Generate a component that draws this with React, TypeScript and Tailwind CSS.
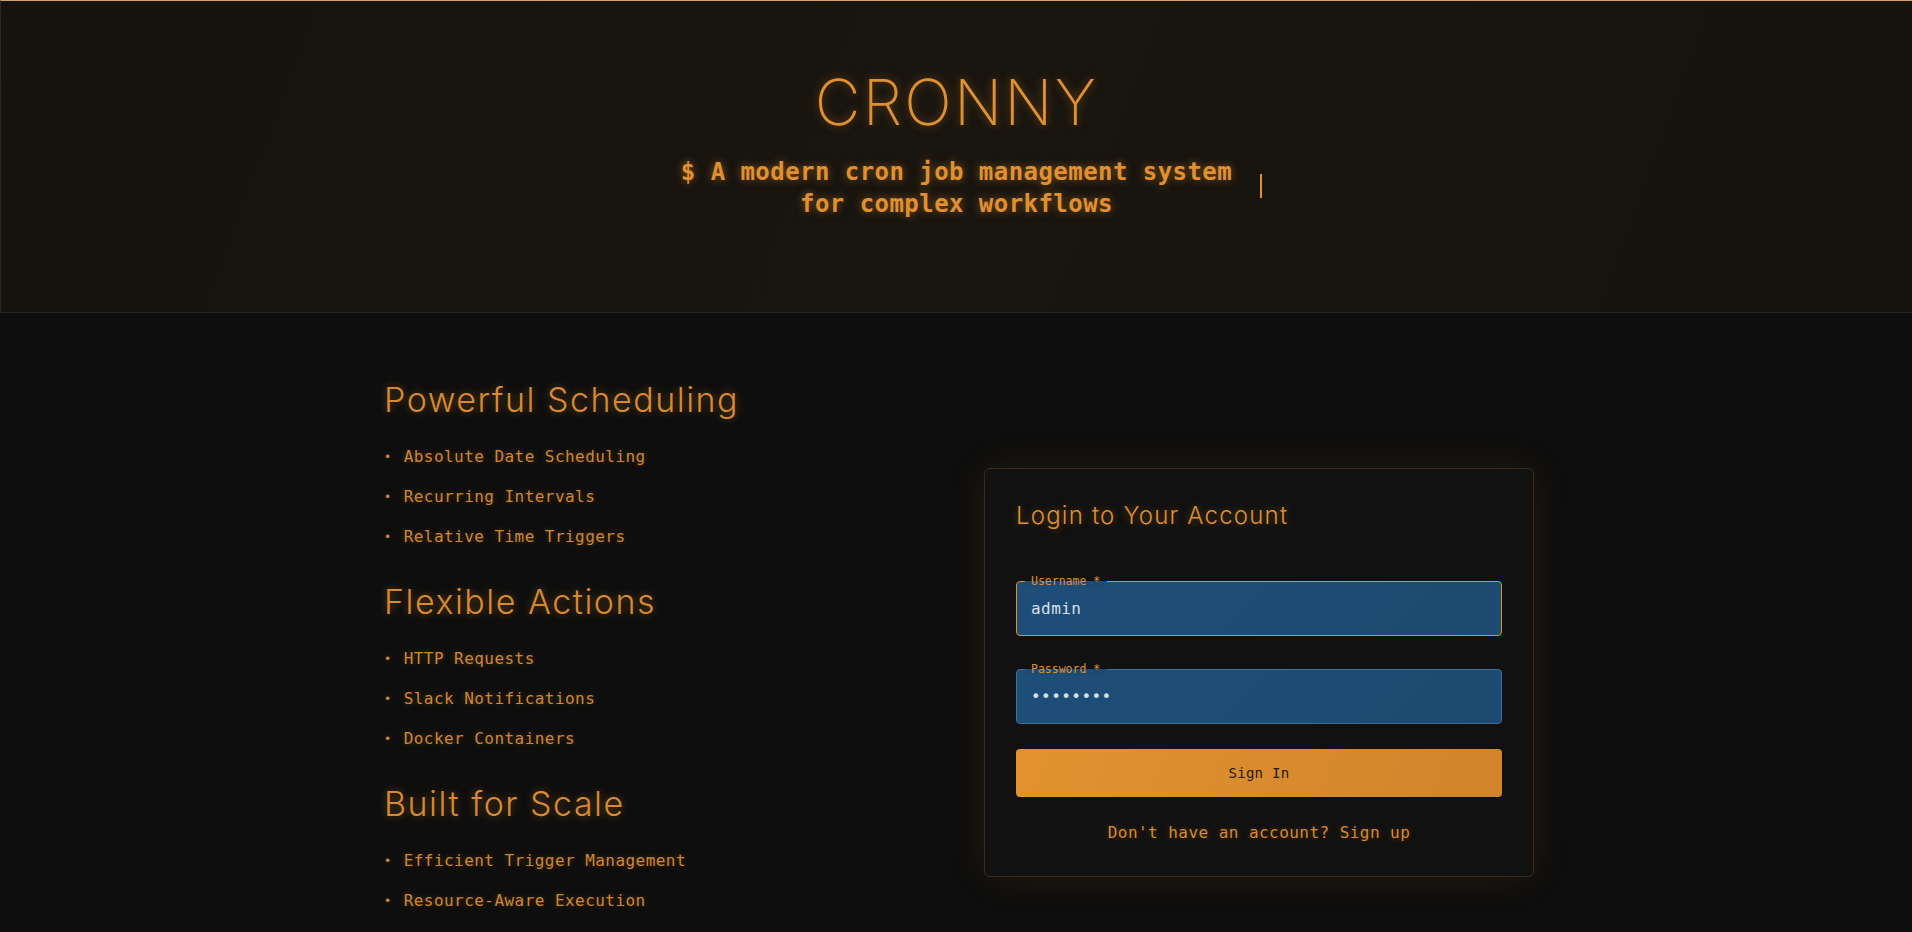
import React, { useState } from "react";

const sections = [
  {
    title: "Powerful Scheduling",
    items: ["Absolute Date Scheduling", "Recurring Intervals", "Relative Time Triggers"],
  },
  {
    title: "Flexible Actions",
    items: ["HTTP Requests", "Slack Notifications", "Docker Containers"],
  },
  {
    title: "Built for Scale",
    items: ["Efficient Trigger Management", "Resource-Aware Execution"],
  },
];

const mono = "font-['DejaVu_Sans_Mono','Liberation_Mono',monospace]";
const display = "font-['Inter','Lato',sans-serif]";

interface FieldProps {
  label: string;
  value: string;
  type?: string;
  focused?: boolean;
}

const Field: React.FC<FieldProps> = ({ label, value, type = "text", focused }) => {
  const [val, setVal] = useState(value);
  return (
    <div className="relative">
      <span
        className={`absolute left-[9px] top-[-7px] z-10 bg-[linear-gradient(to_bottom,#111111_50%,#1d4b73_50%)] pl-[6px] pr-[7px] text-[11.5px] leading-[14px] text-[#e0902f] ${mono}`}
      >
        {label}&#8202;*
      </span>
      <input
        type={type}
        value={val}
        onChange={(e) => setVal(e.target.value)}
        className={`h-[55px] w-full rounded-[4px] border bg-[linear-gradient(135deg,#1e4e78,#1c4a70)] px-[14px] text-[16px] tracking-[0.45px] text-[#d4e0ec] outline-none ${mono} ${
          focused ? "border-[#e0902f]" : "border-[#3f6f9c]"
        }`}
      />
    </div>
  );
};

const App: React.FC = () => {
  return (
    <div className="min-h-screen bg-[#0e0e0e]">
      <header className="flex h-[313px] flex-col items-center border-t border-b border-l border-t-[#d4a36b] border-b-[#2a241c] border-l-[#2b2824] bg-[linear-gradient(110deg,#16130e_0%,#19150f_50%,#16130e_100%)] pt-[70px]">
        <h1
          className={`text-[63px] font-extralight leading-none tracking-[0.035em] text-[#e0902f] [text-shadow:0_0_10px_rgba(224,144,47,0.45)] ${display}`}
        >
          CRONNY
        </h1>
        <div className="relative mt-[22px] w-[606px]">
          <p
            className={`text-center text-[24px] font-bold leading-[32px] tracking-[0.45px] text-[#e0902f] [text-shadow:0_0_8px_rgba(224,144,47,0.55)] ${mono}`}
          >
            $ A modern cron job management system for complex workflows
          </p>
          <span className="absolute right-[-2px] top-[18px] h-[24px] w-[2px] bg-[#e0902c]" />
        </div>
      </header>

      <main className="pl-[6px] pt-[66px] pb-16">
        <div className="mx-auto grid w-[1150px] grid-cols-2 items-start gap-[50px]">
          <div className="flex flex-col gap-[32px]">
            {sections.map((section) => (
              <section key={section.title}>
                <h2
                  className={`mb-[25px] text-[34px] font-light leading-[41px] tracking-[1.5px] text-[#d98a30] [text-shadow:0_0_8px_rgba(224,144,47,0.45)] ${display}`}
                >
                  {section.title}
                </h2>
                <ul className="space-y-4">
                  {section.items.map((item) => (
                    <li
                      key={item}
                      className={`flex items-center text-[16px] leading-[24px] tracking-[0.45px] text-[#d08732] [text-shadow:0_0_6px_rgba(224,144,47,0.3)] ${mono}`}
                    >
                      <span className="mr-[12px] text-[12px]">•</span>
                      {item}
                    </li>
                  ))}
                </ul>
              </section>
            ))}
          </div>

          <div className="mt-[89px] rounded-[6px] border border-[#3b2a18] bg-[#111111] p-[31px] shadow-[0_0_40px_rgba(224,144,47,0.10)]">
            <h3
              className={`mb-[49px] text-[24px] font-light leading-[32px] tracking-[1.2px] text-[#e0902f] [text-shadow:0_0_8px_rgba(224,144,47,0.4)] ${display}`}
            >
              Login to Your Account
            </h3>
            <div className="flex flex-col gap-[33px]">
              <Field label="Username" value="admin" focused />
              <Field label="Password" value="password" type="password" />
            </div>
            <button
              className={`mt-[25px] h-[48px] w-full rounded-[4px] bg-[linear-gradient(110deg,#e3922f,#d0842b)] text-[14px] tracking-[0.3px] text-[#1c1a17] ${mono}`}
            >
              Sign In
            </button>
            <p
              className={`mt-[24px] text-center text-[16px] leading-[24px] tracking-[0.45px] text-[#d98a2c] [text-shadow:0_0_6px_rgba(224,144,47,0.3)] ${mono}`}
            >
              Don't have an account? Sign up
            </p>
          </div>
        </div>
      </main>
    </div>
  );
};

export default App;
